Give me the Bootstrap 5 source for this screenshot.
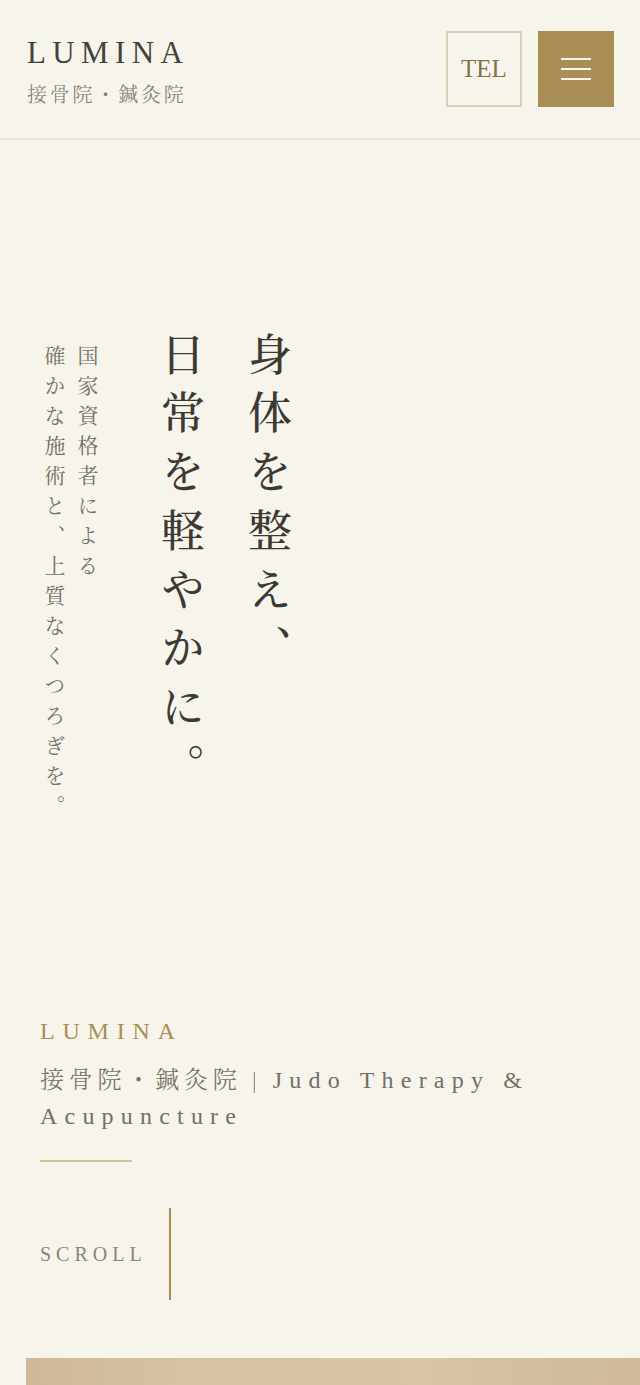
<!DOCTYPE html>
<html lang="ja">
<head>
    <meta charset="UTF-8">
    <meta name="viewport" content="width=device-width, initial-scale=1.0">
    <title>LUMINA</title>
    <link href="https://cdn.jsdelivr.net/npm/bootstrap@5.3.0/dist/css/bootstrap.min.css" rel="stylesheet">
    <style>
        html, body { height: 1385px; overflow: hidden; }
        body {
            background: #f7f4ec;
            color: #3d3a34;
            font-family: "Liberation Serif", "Noto Serif CJK JP", "Noto Sans CJK JP", serif;
            font-weight: 300;
        }
        .site-head { height: 140px; padding: 31px 26px 0 27px; border-bottom: 2px solid #e6e3da; }
        .logo-en { font-size: 31px; line-height: 36px; letter-spacing: 6.4px; margin-top: 4px; color: #45423b; }
        .logo-ja { font-size: 20px; line-height: 28px; letter-spacing: .14em; color: #7f7a70; margin-top: 10px; }
        .tel-box, .menu-box { width: 76px; height: 76px; }
        .tel-box { border: 2px solid #d5d2b8; color: #7f7448; font-size: 25px; }
        .menu-box { background: #a88e55; border: 0; padding: 0; }
        .menu-box span { display: block; width: 30px; height: 2px; background: #f7f4ec; }
        .hero { padding: 192px 0 0 36px; height: 877px; }
        .hero-sub, .hero-title { writing-mode: vertical-rl; margin: 0; }
        .hero-sub { font-size: 21px; font-weight: 400; line-height: 33px; letter-spacing: 9px; color: #756f64; margin-top: 13px; }
        .hero-title { font-size: 44px; font-weight: 500; line-height: 87px; letter-spacing: 14.7px; color: #3d3a34; margin-left: 33px; }
        .brand-block { padding: 0 40px; }
        .brand-name { font-size: 24px; line-height: 28px; letter-spacing: 7.8px; color: #a88e55; }
        .brand-desc { font-size: 24px; line-height: 36px; letter-spacing: .2em; color: #756f64; margin-top: 17px; }
        .brand-desc .latin { letter-spacing: 7.2px; }
        .brand-desc .divider { display: inline-block; will-change: transform; color: #9a958a; }
        .brand-rule { width: 92px; height: 2px; background: #d4c595; margin-top: 26px; }
        .scroll-row { padding-left: 40px; margin-top: 46px; height: 92px; }
        .scroll-label { font-size: 20px; letter-spacing: 5px; color: #8a857b; width: 129px; }
        .scroll-bar { width: 2px; height: 92px; background: #a88e55; }
        .hero-strip { height: 60px; margin: 58px 0 0 26px; background: linear-gradient(90deg, #cfb797 0%, #d5c3a3 25%, #d6c5a6 65%, #cfb99a 100%); }
    </style>
</head>
<body>
    <header class="site-head d-flex justify-content-between align-items-start">
        <div>
            <div class="logo-en">LUMINA</div>
            <div class="logo-ja">接骨院・鍼灸院</div>
        </div>
        <div class="d-flex gap-3">
            <a class="tel-box d-flex align-items-center justify-content-center text-decoration-none">TEL</a>
            <button class="menu-box d-flex flex-column align-items-center justify-content-center gap-2" type="button" aria-label="menu">
                <span></span><span></span><span></span>
            </button>
        </div>
    </header>

    <section class="hero d-flex align-items-start">
        <p class="hero-sub">国家資格者による<br>確かな施術と、上質なくつろぎを。</p>
        <h1 class="hero-title">身体を整え、<br>日常を軽やかに。</h1>
    </section>

    <section class="brand-block">
        <div class="brand-name">LUMINA</div>
        <div class="brand-desc">接骨院・鍼灸院 <span class="divider">|</span> <span class="latin">Judo Therapy &amp;</span><br><span class="latin">Acupuncture</span></div>
        <div class="brand-rule"></div>
    </section>

    <div class="scroll-row d-flex align-items-center">
        <div class="scroll-label">SCROLL</div>
        <div class="scroll-bar"></div>
    </div>

    <div class="hero-strip"></div>
</body>
</html>
